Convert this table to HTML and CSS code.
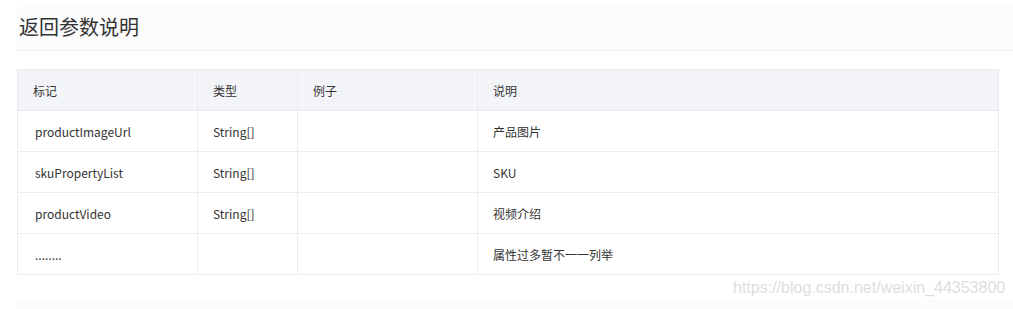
FILE: index.html
```html
<!DOCTYPE html>
<html lang="zh">
<head>
<meta charset="utf-8">
<link rel="stylesheet" href="styles.css">
</head>
<body>
<div class="page">
  <div class="title-bar"><h2 class="title">返回参数说明</h2></div>
  <table class="params">
    <colgroup>
      <col class="c1"><col class="c2"><col class="c3"><col class="c4">
    </colgroup>
    <thead>
      <tr><th>标记</th><th>类型</th><th>例子</th><th>说明</th></tr>
    </thead>
    <tbody>
      <tr><td>productImageUrl</td><td>String[]</td><td></td><td>产品图片</td></tr>
      <tr><td>skuPropertyList</td><td>String[]</td><td></td><td>SKU</td></tr>
      <tr><td>productVideo</td><td>String[]</td><td></td><td>视频介绍</td></tr>
      <tr><td>........</td><td></td><td></td><td>属性过多暂不一一列举</td></tr>
    </tbody>
  </table>
  <div class="bottom-band"></div>
  <div class="watermark">https://blog.csdn.net/weixin_44353800</div>
</div>
</body>
</html>
```
FILE: styles.css
```css
html, body {
  margin: 0;
  padding: 0;
  background: #ffffff;
}
body {
  font-family: "Noto Sans CJK SC", "Noto Sans", sans-serif;
  color: #333;
  width: 1013px;
  height: 309px;
  overflow: hidden;
}
.page {
  position: relative;
  padding-top: 2px;
  margin-left: 17px;
  height: 307px;
}
.title-bar {
  height: 48px;
  background: #fcfcfd;
  border-bottom: 1px solid #ececf2;
  display: flex;
  align-items: center;
  padding-left: 2px;
}
.title {
  margin: 0;
  font-size: 20px;
  font-weight: 400;
  color: #333;
  line-height: 1;
  padding-top: 2px;
}
.params {
  margin-top: 18px;
  width: 982px;
  border-collapse: collapse;
  table-layout: fixed;
  font-size: 12px;
  border: 1px solid #ebecef;
}
.c1 { width: 180px; }
.c2 { width: 100px; }
.c3 { width: 180px; }
.params th, .params td {
  height: 40px;
  padding: 0 0 0 15px;
  text-align: left;
  border: 1px solid #ebecef;
  border-left-color: #ececf0;
  vertical-align: middle;
  color: #333;
}
.params th {
  font-weight: 400;
  background: #f3f4f8;
  border-top: none;
  border-bottom: none;
}
.params td:first-child {
  padding-left: 17px;
}
.bottom-band {
  margin-top: 24px;
  height: 10px;
  background: #fcfcfd;
}
.watermark {
  position: absolute;
  left: 716px;
  top: 279px;
  font-family: "Liberation Sans", Arial, sans-serif;
  font-size: 16px;
  color: #dedede;
  white-space: nowrap;
}
```
